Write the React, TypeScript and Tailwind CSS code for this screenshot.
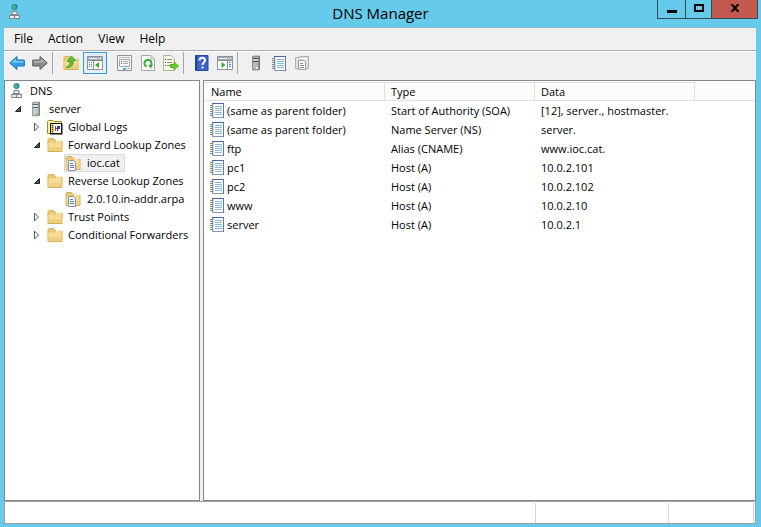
import type { ReactNode } from "react";

function Arrow({ gray = false }: { gray?: boolean }) {
  return (
    <svg width="16" height="16" viewBox="0 0 16 16" className={gray ? "scale-x-[-1]" : ""}>
      <path
        d="M.7 8 8 1.5V5h7.3v6H8v3.500Z"
        fill={gray ? "#8c8c8c" : "#2f9fe8"}
        stroke={gray ? "#606060" : "#2574b4"}
      />
      <path d="M2.500 7.800 7 3.700V6h7.300v1.500Z" fill={gray ? "#b4b4b4" : "#7accfa"} />
    </svg>
  );
}

function FolderIcon({ page = false, up = false }: { page?: boolean; up?: boolean }) {
  return (
    <svg width="16" height="16" viewBox="0 0 16 16">
      <path d="M1 14.500V2.500l1-1h4.500L8 3.500h6l1 1v10Z" fill="#e9c877" stroke="#d3ae5c" />
      <path d="M9 3h5v1.500H9Z" fill="#fff6d8" />
      <path d="M1.500 5.500H8l1-1h5.500V14h-13Z" fill="#f6dc94" />
      <path d="M1.500 10h13v4h-13Z" fill="#efcf80" />
      {page && (
        <g>
          <path d="M3.500 5.500h5l2 2v8h-7Z" fill="#fff" stroke="#8396ac" />
          <path d="M5 8.500h3M5 10.500h4M5 12.500h4" stroke="#4c7dbb" />
        </g>
      )}
      {up && (
        <path
          d="M3 12.500c3-1 4-3 4-6H4L8.500 1 13 5.500h-2.500C10.500 11 7 13 3 12.500Z"
          fill="#58c431"
          stroke="#2c941c"
          strokeWidth=".7"
        />
      )}
    </svg>
  );
}

function DnsIcon() {
  return (
    <svg width="14" height="16" viewBox="0 0 14 16">
      <circle cx="6.500" cy="3" r="2.700" fill="#2fa5ba" stroke="#246f91" strokeWidth=".7" />
      <path d="M4.500 2.500 6.500 1l.5 2-1.500 2Z" fill="#58c73a" />
      <path d="M7.500 1.500H9V3H7.500Z" fill="#2559bd" />
      <g fill="#e2e2e6" stroke="#85858d">
        <path d="M4 7.500h5v3H4ZM3 10.500h3.500v1H3ZM6.500 10.500H10v1H6.500ZM1.500 11.500h5v3h-5ZM6.500 11.500h5v3h-5Z" />
      </g>
      <path d="M5.500 9h2M3 13h2M8 13h2" stroke="#fff" />
    </svg>
  );
}

function ServerIcon({ dark = false }: { dark?: boolean }) {
  return (
    <svg width="10" height="16" viewBox="0 0 10 16">
      <path d="M1 1.500 2.500.5H9v14l-1 1H1Z" fill={dark ? "#a1a1a1" : "#c1c5c9"} />
      <path d="M1.500 1.500h6v13h-6Z" fill={dark ? "#b8b8b8" : "#c8ccd0"} stroke={dark ? "#8c8c8c" : "#989da3"} />
      <path d="M8.500 1v13.500" stroke={dark ? "#747474" : "#7b8188"} />
      <path d="M2 3.500h5M2 6.500h5" stroke={dark ? "#444" : "#555c63"} />
      <path d="M2 5h5" stroke="#f4f4f4" />
      <path d="M5 12h2v2H5Z" fill={dark ? "#eee" : "#72dc28"} />
    </svg>
  );
}

function LogsIcon() {
  return (
    <svg width="16" height="16" viewBox="0 0 16 16">
      <path d="M.5 14.500v-12l1-1H6l1 1h7.500v12Z" fill="#fff1a4" stroke="#a58b28" />
      <path d="M3 4.500h12.500v11H3Z" fill="#111" />
      <path d="M3.500 4.500h11v10h-11Z" fill="#fff" stroke="#111" />
      <path d="M4 5h3v9H4Z" fill="#e8d637" />
      <path d="M5 6h1v1H5ZM5 8h1v1H5ZM5 10h1v1H5ZM5 12h1v1H5Z" fill="#111" />
      <path d="M8.500 7v5M8 9.500h2" stroke="#d32828" />
      <path d="M10 7h3v3h-2v2h-1Z" fill="#3438c8" />
    </svg>
  );
}

function RecordIcon() {
  return (
    <svg width="14" height="15" viewBox="0 0 14 15">
      <path d="M2.500.5h11v14h-11Z" fill="#fff" stroke="#8795aa" />
      <path d="M2 .5h12" stroke="#4d64a4" />
      <path d="M13.500 0v15" stroke="#6377aa" />
      <path d="M5 3.500h7M5 5.500h7M5 7.500h7M5 9.500h7M5 11.500h7" stroke="#86bcd9" />
      <path d="M0 2.500h4M0 4.500h4M0 6.500h4M0 8.500h4M0 10.500h4M0 12.500h4" stroke="#858585" />
      <path d="M3.500 1v13" stroke="#d4dde5" />
    </svg>
  );
}

function PaneIcon({ play = false }: { play?: boolean }) {
  return (
    <svg width="16" height="14" viewBox="0 0 16 14">
      <path d="M.5.5h15v13H.5Z" fill="#fff" stroke="#8c929c" />
      <path d="M1 1h14v3H1Z" fill="#a7afba" />
      <path d="M2 2.500h8" stroke="#e8eaed" />
      <path d="M11 2.500h1M13 2.500h1" stroke="#fff" />
      <path d="M1 4.500h14" stroke="#7d8795" />
      {play ? (
        <g>
          <path d="M10.500 5v8" stroke="#8c929c" />
          <path d="m4.500 6 4 3-4 3Z" fill="#38ac25" />
          <path d="M12 6.500h2M12 8.500h2M12 10.500h2" stroke="#3e81d3" />
        </g>
      ) : (
        <g>
          <path d="M6.500 5v8" stroke="#8c929c" />
          <path d="M2 6.500h1M4 6.500h1M2 8.500h1M4 8.500h1M2 10.500h1M4 10.500h1" stroke="#3e81d3" />
          <path d="m12 6-4 3 4 3Z" fill="#38ac25" />
        </g>
      )}
    </svg>
  );
}

function PropertiesIcon() {
  return (
    <svg width="16" height="16" viewBox="0 0 16 16">
      <path d="M.5.5h14v15H.5Z" fill="#f8f8f8" stroke="#949494" />
      <path d="M2 2.500h11" stroke="#aeb4bd" />
      <path d="M2.500 4.500h10v7h-10Z" fill="#fff" stroke="#a0a8b3" />
      <path d="M4 6.500h1M4 8.500h1" stroke="#3d78b8" />
      <path d="M6 6.500h5M6 8.500h5" stroke="#a3a3a3" />
      <path d="M6 14h3" stroke="#35bde7" strokeWidth="2" />
      <path d="M10 13.500h3" stroke="#aaa" />
    </svg>
  );
}

function RefreshIcon() {
  return (
    <svg width="14" height="16" viewBox="0 0 14 16">
      <path d="M.5.5H10l3.500 3.500v11.500H.5Z" fill="#fafafa" stroke="#a6a6a6" />
      <path d="M10 .5V4h3.500" fill="#e0e0e0" stroke="#b5b5b5" />
      <path d="M5.500 11.500A3.500 3.500 0 1 1 10 10" fill="none" stroke="#35ad35" strokeWidth="2" />
      <path d="m7 10 5-.5-2 4Z" fill="#35ad35" />
    </svg>
  );
}

function ExportIcon() {
  return (
    <svg width="16" height="16" viewBox="0 0 16 16">
      <path d="M.5.5H8L11.500 4v11.500H.5Z" fill="#fffcee" stroke="#b7ae90" />
      <path d="M2 4.500h1M2 7.500h1M2 10.500h1" stroke="#444" />
      <path d="M4 4.500h5M4 7.500h5M4 10.500h5" stroke="#858585" />
      <path d="M7.500 9.500H11V7l4.500 4-4.500 4v-2.500H7.500Z" fill="#66d02d" stroke="#4aaf20" />
    </svg>
  );
}

function HelpIcon() {
  return (
    <svg width="14" height="16" viewBox="0 0 14 16">
      <path d="M.5.5h12.500v15H.5Z" fill="#3b63cb" stroke="#27469c" />
      <path d="M1.500 1v14" stroke="#203780" />
      <path d="M4.500 5.500C4.500 2 10 2 10 5.200 10 7.500 7.500 7.500 7.500 10" fill="none" stroke="#fff" strokeWidth="2" />
      <path d="M6.500 11.500h2v2h-2Z" fill="#fff" />
    </svg>
  );
}

function NewZoneIcon() {
  return (
    <svg width="15" height="16" viewBox="0 0 15 16">
      <path d="M.5 13.500v-11h4v-1h9v12Z" fill="#e2e2e2" stroke="#b0b0b0" />
      <path d="M6 3.500h6" stroke="#fff" />
      <path d="M3.500 5.500h5l2 2v7h-7Z" fill="#fff" stroke="#999" />
      <path d="M5 8.500h3M5 10.500h4M5 12.500h4" stroke="#888" />
    </svg>
  );
}

function Tool({ label, children, active = false }: { label: string; children: ReactNode; active?: boolean }) {
  return (
    <button
      type="button"
      aria-label={label}
      aria-pressed={active || undefined}
      className={`flex h-[22px] shrink-0 items-center justify-center ${
        active ? "w-6 border border-[#3399dd] bg-[#e2f0fa]" : "w-4"
      }`}
    >
      {children}
    </button>
  );
}

function Separator() {
  return <div role="separator" className="h-[22px] w-px shrink-0 bg-[#a5a5a5]" />;
}

type NodeProps = {
  label: string;
  icon: ReactNode;
  level: number;
  open?: boolean;
  selected?: boolean;
  children?: ReactNode;
};

const indents = ["pl-[3px]", "pl-[7px]", "pl-[26px]", "pl-[59px]"];
const iconWidths = ["w-[18px]", "w-3", "w-4", "w-4"];
const labelGaps = ["ml-1", "ml-[7px]", "ml-[5px]", "ml-[6px]"];

function TreeNode({ label, icon, level, open, selected, children }: NodeProps) {
  return (
    <li role="treeitem" aria-expanded={open} aria-selected={selected}>
      <div className={`flex h-[18px] items-center ${indents[level]}`}>
        {open !== undefined && level > 0 && (
          <button
            type="button"
            aria-label={`${open ? "Collapse" : "Expand"} ${label}`}
            className={`flex w-3 items-center justify-center ${level === 1 ? "mr-[6px]" : "mr-1"}`}
          >
            <svg width="8" height="10" viewBox="0 0 8 10">
              {open ? (
                <path d="M6.500 2.500v5h-5Z" fill="#555" stroke="#222" />
              ) : (
                <path d="M1.500 1v8l4-4Z" fill="#fff" stroke="#555" />
              )}
            </svg>
          </button>
        )}
        <span
          className={`flex h-[18px] items-center ${
            selected ? "border border-[#dadada] bg-[#f0f0f0] pr-1" : level === 3 ? "border border-transparent" : ""
          }`}
        >
          <span className={`flex shrink-0 justify-center ${iconWidths[level]}`}>{icon}</span>
          <span className={labelGaps[level]}>{label}</span>
        </span>
      </div>
      {children && <ul role="group">{children}</ul>}
    </li>
  );
}

const records = [
  ["(same as parent folder)", "Start of Authority (SOA)", "[12], server., hostmaster."],
  ["(same as parent folder)", "Name Server (NS)", "server."],
  ["ftp", "Alias (CNAME)", "www.ioc.cat."],
  ["pc1", "Host (A)", "10.0.2.101"],
  ["pc2", "Host (A)", "10.0.2.102"],
  ["www", "Host (A)", "10.0.2.10"],
  ["server", "Host (A)", "10.0.2.1"],
];

export default function App() {
  return (
    <div className="flex h-screen flex-col bg-[#66caea] font-['Open_Sans','Noto_Sans',sans-serif] text-[11px] leading-[18px] text-black">
      <header className="grid h-[27px] shrink-0 grid-cols-[1fr_auto_1fr] items-start">
        <div className="pt-1 pl-2">
          <DnsIcon />
        </div>
        <h1 className="text-[15px] leading-[26px]">DNS Manager</h1>
        <div className="mr-[3px] flex h-[19px] justify-self-end border border-t-0 border-[#344b54]">
          <button type="button" aria-label="Minimize" className="flex w-[28px] items-center justify-center border-r border-[#344b54]">
            <span className="mt-1 h-[3px] w-[10px] bg-black" />
          </button>
          <button type="button" aria-label="Maximize" className="flex w-[26px] items-center justify-center border-r border-[#344b54]">
            <span className="mb-[2px] h-2 w-[10px] border-2 border-black" />
          </button>
          <button type="button" aria-label="Close" className="flex w-[45px] items-center justify-center bg-[#c35a50]">
            <svg width="10" height="8" viewBox="0 0 10 8" className="mb-[2px]">
              <path d="m1.500 0 7 8m0-8-7 8" stroke="#000" strokeWidth="2" />
            </svg>
          </button>
        </div>
      </header>

      <div className="mr-[5px] mb-[3px] ml-1 flex min-h-0 flex-1 flex-col bg-[#f0f0f0]">
        <nav className="flex h-6 shrink-0 items-center gap-[15px] border-t border-b border-t-[#8fb3c0] border-b-[#adadad] pl-[10px] text-[12px]">
          <button type="button">File</button>
          <button type="button">Action</button>
          <button type="button">View</button>
          <button type="button">Help</button>
        </nav>

        <div role="toolbar" aria-label="Tools" className="flex h-[29px] shrink-0 items-start border-t border-white pl-[5px]">
          <div className="flex items-center">
            <div className="flex gap-[7px] pr-1">
              <Tool label="Back"><Arrow /></Tool>
              <Tool label="Forward"><Arrow gray /></Tool>
            </div>
            <Separator />
            <div className="flex pr-[10px] pl-[10px]">
              <Tool label="Up one level"><FolderIcon up /></Tool>
              <div className="ml-1"><Tool label="Show or hide console tree" active><PaneIcon /></Tool></div>
            </div>
            <div className="flex gap-[7px] pr-1">
              <Tool label="Properties"><PropertiesIcon /></Tool>
              <Tool label="Refresh"><RefreshIcon /></Tool>
              <Tool label="Export list"><ExportIcon /></Tool>
            </div>
            <Separator />
            <div className="flex gap-[7px] pr-1 pl-[10px]">
              <Tool label="Help"><HelpIcon /></Tool>
              <Tool label="Show or hide action pane"><PaneIcon play /></Tool>
            </div>
            <Separator />
            <div className="flex gap-[7px] pl-[10px]">
              <Tool label="New server"><ServerIcon dark /></Tool>
              <Tool label="New record"><RecordIcon /></Tool>
              <Tool label="New zone"><NewZoneIcon /></Tool>
            </div>
          </div>
        </div>

        <main className="flex min-h-0 flex-1 gap-[3px]">
          <aside className="w-[196px] shrink-0 overflow-hidden border border-[#828790] bg-white pt-px whitespace-nowrap">
            <ul role="tree" aria-label="DNS">
              <TreeNode label="DNS" icon={<DnsIcon />} level={0} open>
                <TreeNode label="server" icon={<ServerIcon />} level={1} open>
                  <TreeNode label="Global Logs" icon={<LogsIcon />} level={2} open={false} />
                  <TreeNode label="Forward Lookup Zones" icon={<FolderIcon />} level={2} open>
                    <TreeNode label="ioc.cat" icon={<FolderIcon page />} level={3} selected />
                  </TreeNode>
                  <TreeNode label="Reverse Lookup Zones" icon={<FolderIcon />} level={2} open>
                    <TreeNode label="2.0.10.in-addr.arpa" icon={<FolderIcon page />} level={3} />
                  </TreeNode>
                  <TreeNode label="Trust Points" icon={<FolderIcon />} level={2} open={false} />
                  <TreeNode label="Conditional Forwarders" icon={<FolderIcon />} level={2} open={false} />
                </TreeNode>
              </TreeNode>
            </ul>
          </aside>

          <section className="min-w-0 flex-1 overflow-hidden border border-[#828790] bg-white pt-px pl-px">
            <table className="w-full table-fixed border-separate border-spacing-0 text-left whitespace-nowrap">
              <colgroup>
                <col className="w-[180px]" />
                <col className="w-[150px]" />
                <col className="w-[160px]" />
                <col />
              </colgroup>
              <thead>
                <tr className="h-[19px]">
                  {["Name", "Type", "Data"].map((name) => (
                    <th key={name} scope="col" className="border-t border-r border-b border-[#e0e0e0] bg-[#fcfcfc] px-[6px] py-0 leading-[17px] font-normal">
                      {name}
                    </th>
                  ))}
                  <td className="border-b border-[#e0e0e0] bg-[#fcfcfc] p-0" />
                </tr>
              </thead>
              <tbody>
                {records.map(([name, type, data], i) => (
                  <tr key={i} className="h-[19px]">
                    <td className="p-0 pl-[5px]">
                      <span className="flex items-center gap-[3px]">
                        <RecordIcon />
                        {name}
                      </span>
                    </td>
                    <td className="px-[6px] py-0">{type}</td>
                    <td className="px-[6px] py-0">{data}</td>
                    <td className="p-0" />
                  </tr>
                ))}
              </tbody>
            </table>
          </section>
        </main>

        <footer className="flex h-[23px] shrink-0 border border-[#a0a0a0] bg-white pt-px pr-px">
          <div className="flex-1 border-r border-[#d7d7d7]" />
          <div className="w-[133px] border-r border-[#d7d7d7]" />
          <div className="w-[85px] border-r border-[#d7d7d7]" />
        </footer>
      </div>
    </div>
  );
}
